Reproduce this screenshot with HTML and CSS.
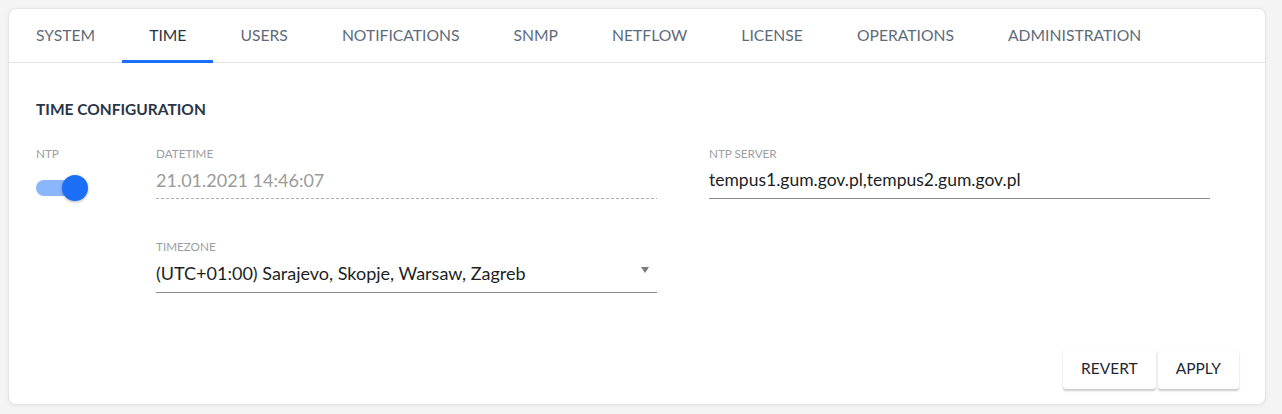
FILE: index.html
```html
<!DOCTYPE html>
<html>
<head>
<meta charset="utf-8">
<link rel="stylesheet" href="styles.css">
</head>
<body>
<div class="card">
  <nav class="tabs">
    <div class="tab">SYSTEM</div>
    <div class="tab active">TIME</div>
    <div class="tab">USERS</div>
    <div class="tab">NOTIFICATIONS</div>
    <div class="tab">SNMP</div>
    <div class="tab">NETFLOW</div>
    <div class="tab">LICENSE</div>
    <div class="tab">OPERATIONS</div>
    <div class="tab">ADMINISTRATION</div>
  </nav>
  <section class="content">
    <h2 class="heading">TIME CONFIGURATION</h2>
    <div class="form">
      <div class="ntp-col">
        <div class="label">NTP</div>
        <div class="switch"><div class="track"></div><div class="thumb"></div></div>
      </div>
      <div class="col">
        <div class="field">
          <div class="label">DATETIME</div>
          <div class="value disabled">21.01.2021 14:46:07</div>
        </div>
        <div class="field tz">
          <div class="label">TIMEZONE</div>
          <div class="value select"><span>(UTC+01:00) Sarajevo, Skopje, Warsaw, Zagreb</span><span class="arrow"></span></div>
        </div>
      </div>
      <div class="col">
        <div class="field">
          <div class="label">NTP SERVER</div>
          <div class="value server">tempus1.gum.gov.pl,tempus2.gum.gov.pl</div>
        </div>
      </div>
    </div>
    <div class="actions">
      <button class="btn">REVERT</button>
      <button class="btn">APPLY</button>
    </div>
  </section>
</div>
</body>
</html>
```
FILE: styles.css
```css
* { box-sizing: border-box; }
html, body { margin: 0; }
body {
  background: #f4f4f5;
  padding: 8px 16px 0 8px;
  font-family: Lato, "Liberation Sans", sans-serif;
  height: 414px;
  overflow: hidden;
}
.card {
  background: #fff;
  border: 1px solid #e2e4e8;
  border-radius: 8px;
  height: 397px;
  box-shadow: 0 1px 4px rgba(0,0,0,0.05);
  display: flex;
  flex-direction: column;
}
.tabs {
  display: flex;
  height: 54px;
  border-bottom: 1px solid #e2e4e8;
}
.tab {
  padding: 0 27px;
  min-width: 90px;
  font-size: 15.7px;
  color: #606b7a;
  display: flex;
  align-items: center;
  justify-content: center;
  border-bottom: 2px solid transparent;
  margin-bottom: -1px;
}
.tab.active {
  color: #263445;
  border-bottom: 3px solid #1a6ff6;
  padding-top: 1px;
}
.content {
  flex: 1;
  padding: 36px 26px 15px 27px;
  display: flex;
  flex-direction: column;
}
.heading {
  margin: 0;
  font-size: 15.5px;
  line-height: 20px;
  font-weight: 700;
  color: #2a3647;
}
.form {
  display: flex;
  margin-top: 27px;
}
.ntp-col { width: 120px; }
.col {
  width: 501px;
  display: flex;
  flex-direction: column;
  gap: 40px;
}
.col + .col { margin-left: 52px; }
.label {
  font-size: 11.7px;
  line-height: 14px;
  color: #9a9ea4;
}
.value {
  font-size: 18px;
  line-height: 22px;
  color: #1c1f24;
  padding: 9px 0 7px;
  border-bottom: 1px solid #8c8c8c;
}
.value.server { font-size: 17.5px; }
.value.disabled {
  color: #9b9b9b;
  border-bottom: none;
  background-image: repeating-linear-gradient(to right, #b0b0b0 0 3px, transparent 3px 5px);
  background-size: 100% 1px;
  background-repeat: no-repeat;
  background-position: bottom left;
  padding-bottom: 8px;
}
.tz .value { padding-top: 9px; padding-bottom: 8px; }
.select {
  display: flex;
  justify-content: space-between;
  align-items: center;
}
.arrow {
  width: 0; height: 0;
  border-left: 4px solid transparent;
  border-right: 4px solid transparent;
  border-top: 6px solid #7a7a7a;
  margin-right: 8px;
  margin-top: -6px;
}
.switch {
  position: relative;
  width: 54px;
  height: 28px;
  margin-top: 14px;
}
.track {
  position: absolute;
  left: 0; top: 6px;
  width: 44px; height: 16px;
  border-radius: 8px;
  background: #8ab6fb;
}
.thumb {
  position: absolute;
  left: 26px; top: 1px;
  width: 26px; height: 26px;
  border-radius: 50%;
  background: #1a6ff6;
  box-shadow: 0 1px 3px rgba(0,0,0,0.3);
}
.actions {
  margin-top: auto;
  display: flex;
  justify-content: flex-end;
  gap: 2px;
}
.btn {
  font-family: Lato, "Liberation Sans", sans-serif;
  font-size: 15.5px;
  color: #222833;
  background: #fff;
  border: none;
  border-radius: 3px;
  height: 39px;
  padding: 0 18px 4px;
  box-shadow: 0 2px 2px rgba(0,0,0,0.2), 0 0 1px rgba(0,0,0,0.15);
}
```
